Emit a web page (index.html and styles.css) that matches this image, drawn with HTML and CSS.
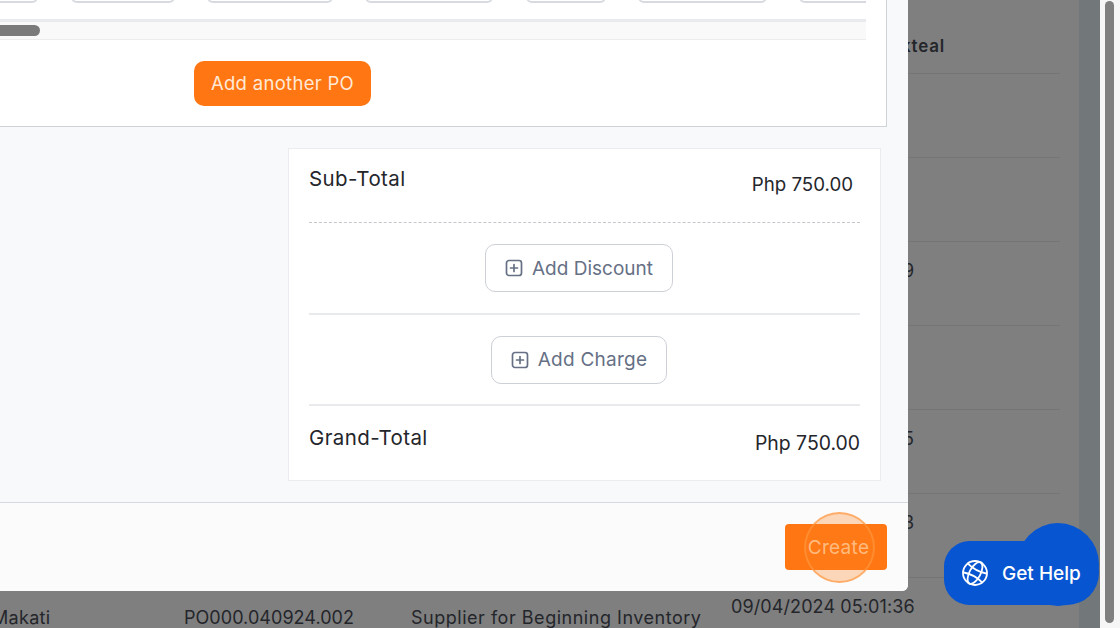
FILE: index.html
```html
<!DOCTYPE html>
<html lang="en">
<head>
<meta charset="utf-8">
<title>Create Purchase Order</title>
<link rel="stylesheet" href="styles.css">
</head>
<body>
<div class="page">
  <div class="backdrop">
    <div class="bg-head">Makteal</div>
    <div class="bg-row"><span></span></div>
    <div class="bg-row"><span></span></div>
    <div class="bg-row"><span>9</span></div>
    <div class="bg-row"><span></span></div>
    <div class="bg-row"><span>5</span></div>
    <div class="bg-row"><span>3</span></div>
    <div class="bg-last">
      <span class="c1">Makati</span>
      <span class="c2">PO000.040924.002</span>
      <span class="c3">Supplier for Beginning Inventory</span>
      <span class="c4">09/04/2024 05:01:36</span>
    </div>
  </div>
  <div class="rail"></div>
  <div class="sb-track"><div class="sb-thumb"></div></div>

  <main class="modal">
    <div class="modal-body">
      <section class="po-panel">
        <div class="table-wrap">
          <div class="fields">
            <i class="f f1"></i><i class="f f2"></i><i class="f f3"></i><i class="f f4"></i><i class="f f5"></i><i class="f f6"></i><i class="f f7"></i>
          </div>
          <div class="hscroll"><div class="hthumb"></div></div>
        </div>
        <button class="btn-orange add-po">Add another PO</button>
      </section>
      <section class="totals">
        <div class="t-row t-sub"><span>Sub-Total</span><span class="amt amt-sub">Php 750.00</span></div>
        <div class="t-action dashed">
          <button class="btn-outline">
            <svg viewBox="0 0 18 18" width="18" height="18" fill="none" stroke="#667085" stroke-width="1.7" stroke-linecap="round"><rect x="1.500" y="1.500" width="15" height="15" rx="2.500"/><path d="M9 5.500v7M5.500 9h7"/></svg>
            Add Discount
          </button>
        </div>
        <div class="t-action solid">
          <button class="btn-outline btn-charge">
            <svg viewBox="0 0 18 18" width="18" height="18" fill="none" stroke="#667085" stroke-width="1.7" stroke-linecap="round"><rect x="1.500" y="1.500" width="15" height="15" rx="2.500"/><path d="M9 5.500v7M5.500 9h7"/></svg>
            Add Charge
          </button>
        </div>
        <div class="t-row t-grand"><span>Grand-Total</span><span class="amt amt-grand">Php 750.00</span></div>
      </section>
    </div>
    <footer class="modal-foot">
      <button class="btn-orange create">Create</button>
      <div class="spot"></div>
    </footer>
  </main>

  <button class="help">
    <svg viewBox="0 0 28 28" width="28" height="28" fill="none" stroke="#fff" stroke-width="1.800" stroke-linejoin="round"><circle cx="14" cy="14" r="12"/><g transform="rotate(28 14 14)"><ellipse cx="14" cy="14" rx="5.500" ry="12"/><path d="M3 9Q14 12.500 25 9M3 19Q14 15.500 25 19"/></g></svg>
    <span class="help-label">Get Help</span>
  </button>
</div>
</body>
</html>
```
FILE: styles.css
```css
* { box-sizing: border-box; }
html, body { margin: 0; padding: 0; }
body { width: 1120px; height: 628px; overflow: hidden; background: #7f7f7f; font-family: Inter, "Liberation Sans", sans-serif; }
button { font-family: inherit; cursor: pointer; }
.page { position: relative; width: 1120px; height: 628px; overflow: hidden; background: #7f7f7f; }

/* dimmed table behind the modal */
.backdrop { position: absolute; left: 0; top: 0; width: 1060px; height: 628px; color: #24262b; font-size: 18px; letter-spacing: .3px; }
.bg-head { height: 74px; padding: 36px 0 0 874px; font-size: 17px; font-weight: 600; letter-spacing: .8px; border-bottom: 1px solid #757575; }
.bg-row { height: 84px; padding: 18px 0 0 903px; border-bottom: 1px solid #757575; }
.bg-last { position: relative; }
.bg-last span { position: absolute; white-space: nowrap; }
.c1 { left: -8px; top: 29px; }
.c2 { left: 184px; top: 29px; letter-spacing: .05px; }
.c3 { left: 411px; top: 29px; letter-spacing: .52px; }
.c4 { left: 731px; top: 18px; letter-spacing: .1px; }
.rail { position: absolute; left: 1079px; top: 0; width: 21px; height: 628px; background: #72777a; }
.sb-track { position: absolute; left: 1100px; top: 0; width: 20px; height: 628px; background: #f6f6f6; padding: 1px 0 0 5px; }
.sb-thumb { width: 9px; height: 622px; background: #7f7f7f; border-radius: 5px; }

/* modal */
.modal { position: absolute; left: -40px; top: 0; width: 948px; height: 591px; display: flex; flex-direction: column; background: #f8f9fb; border-radius: 0 0 6px 6px; }
.modal-body { flex: 1; padding-right: 21px; border-bottom: 1px solid #d5d8de; }
.po-panel { height: 127px; display: flex; flex-direction: column; background: #fff; border: 1px solid #cfd2d6; border-width: 0 1px 1px 0; }
.table-wrap { margin-right: 20px; }
.fields { height: 19px; position: relative; background: #fff; }
.f { position: absolute; top: -5px; height: 8px; background: #fff; border: 1px solid #d7dae0; border-top: 0; border-bottom-width: 2px; border-radius: 0 0 6px 6px; }
.f1 { left: 0; width: 78px; }
.f2 { left: 111px; width: 104px; }
.f3 { left: 247px; width: 126px; }
.f4 { left: 405px; width: 128px; }
.f5 { left: 566px; width: 80px; }
.f6 { left: 678px; width: 129px; }
.f7 { left: 839px; width: 67px; border-radius: 0 0 0 6px; border-right: 0; }
.hscroll { height: 21px; background: #f9f9f9; border-top: 3px solid #e9eaee; border-bottom: 1px solid #ececee; padding-top: 3px; }
.hthumb { width: 80px; height: 11px; background: #7a7a7a; border-radius: 6px; }
.btn-orange { background: #ff7613; color: #ffe9d6; border: 0; border-radius: 10px; font-size: 18.500px; letter-spacing: .3px; }
.add-po { align-self: flex-start; margin: 21px 0 0 234px; width: 177px; height: 45px; font-weight: 400; padding: 0 0 2px; }

.totals { margin: 21px 0 0 328px; width: 593px; height: 333px; background: #fff; border: 1px solid #eaecef; padding: 0 20px; color: #24262b; font-size: 20.500px; letter-spacing: .4px; }
.t-row { display: flex; justify-content: space-between; }
.t-sub { height: 74px; padding-top: 17px; border-bottom: 1px dashed #c4c7cc; }
.amt { font-size: 18.700px; padding-top: 7px; letter-spacing: 0; }
.amt-sub { margin-right: 7px; }
.amt-grand { font-size: 19.400px; padding-top: 6px; }
.t-action { height: 91px; display: flex; align-items: center; justify-content: center; padding-right: 11px; border-bottom: 2px solid #e9eaee; }
.t-action.dashed { height: 92px; }
.btn-outline { display: flex; align-items: center; gap: 9px; height: 48px; padding: 0 19px; background: #fff; border: 1.500px solid #cdd0d6; border-radius: 10px; color: #667085; font-size: 19px; letter-spacing: 0; }
.btn-charge { letter-spacing: .25px; }
.t-grand { padding-top: 19px; }

.modal-foot { position: relative; height: 88px; flex: none; background: #fbfbfb; border-radius: 0 0 6px 6px; display: flex; justify-content: flex-end; align-items: flex-start; padding: 21px 21px 0 0; }
.create { width: 102px; height: 46px; border-radius: 4px; font-size: 19px; color: #ffd3a8; padding: 0 0 0 5px; }
.spot { position: absolute; left: 844px; top: 9px; width: 71px; height: 71px; border-radius: 50%; background: rgba(255, 130, 30, .3); border: 2px solid rgba(255, 150, 60, .65); }

/* help widget */
.help { position: absolute; z-index: 1; left: 944px; top: 541px; width: 155px; height: 64px; display: flex; align-items: center; gap: 13px; padding: 0 0 0 17px; background: #0755d1; color: #fff; border: 0; border-radius: 32px 40px 40px 32px; font-size: 19px; font-weight: 500; }
.help::before { content: ""; position: absolute; z-index: -1; right: 0; top: -18px; width: 82px; height: 83px; border-radius: 50%; background: #0755d1; }
.help svg { flex: none; }
.help-label { white-space: nowrap; }
```
